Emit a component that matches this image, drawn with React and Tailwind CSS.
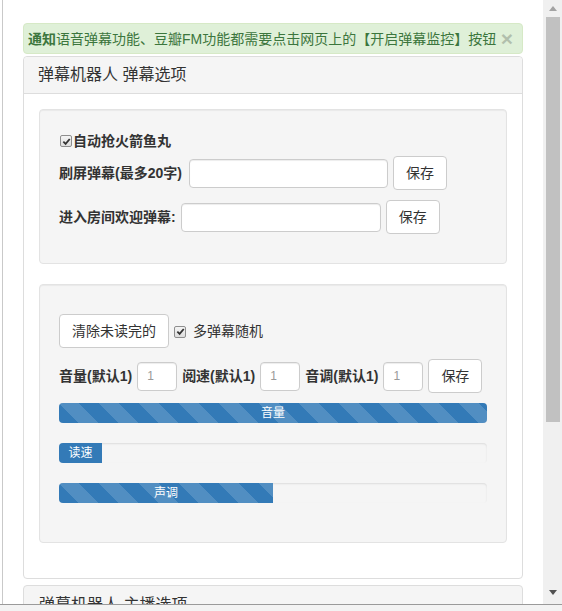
import React from "react";

const font = {
  fontFamily: '"Liberation Sans", "Noto Sans CJK SC", sans-serif',
};

const stripes =
  "bg-[#337ab7] bg-[linear-gradient(45deg,rgba(255,255,255,.15)_25%,transparent_25%,transparent_50%,rgba(255,255,255,.15)_50%,rgba(255,255,255,.15)_75%,transparent_75%,transparent)] bg-[length:40px_40px]";

function Box() {
  return (
    <span className="inline-flex w-[12px] h-[12px] items-center justify-center border border-[#8e8e8e] rounded-[2px] bg-[linear-gradient(#f4f4f4,#dedede)] shrink-0">
      <svg width="9" height="9" viewBox="0 0 10 10">
        <path d="M1.5 5.2 L4 7.6 L8.6 2.2" fill="none" stroke="#333" strokeWidth="2" />
      </svg>
    </span>
  );
}

function Btn({ children, className = "" }) {
  return (
    <button className={"h-[34px] px-[12px] border border-[#ccc] rounded-[4px] bg-white text-[14px] leading-[20px] text-[#333] shrink-0 " + className}>
      {children}
    </button>
  );
}

function Input({ className = "", value }) {
  return (
    <div className={"h-[29px] border border-[#ccc] rounded-[4px] bg-white shadow-[inset_0_1px_1px_rgba(0,0,0,.075)] text-[12px] text-[#999] leading-[27px] pl-[9px] shrink-0 " + className}>
      {value}
    </div>
  );
}

function Progress({ width, label, striped }) {
  return (
    <div className="h-[20px] bg-[#f5f5f5] rounded-[4px] shadow-[inset_0_1px_2px_rgba(0,0,0,.1)] overflow-hidden">
      <div
        className={"h-full text-white text-[12px] leading-[20px] text-center " + (striped ? stripes : "bg-[#337ab7]")}
        style={{ width }}
      >
        {label}
      </div>
    </div>
  );
}

export default function App() {
  return (
    <div className="w-[562px] h-[611px] bg-[#f3f3f3] overflow-hidden text-[14px] leading-[20px] text-[#333]" style={font}>
      <div className="flex h-[605px] border-b border-[#9a9a9a]">
        <div className="w-[2px] bg-white"></div>
        <div className="w-[541px] border-l border-[#c9c9c9] bg-white overflow-hidden px-[20px] pt-[23px]">
          {/* alert */}
          <div className="flex items-center h-[31px] bg-[#dff0d8] border border-[#d6e9c6] rounded-[4px] pl-[4px] pr-[9px] text-[#3c763d]">
            <span className="font-bold">通知</span>
            <span>语音弹幕功能、豆瓣FM功能都需要点击网页上的【开启弹幕监控】按钮</span>
            <span className="ml-auto text-[21px] font-bold leading-[20px] text-black opacity-20">×</span>
          </div>

          {/* panel */}
          <div className="mt-[2px] border border-[#ddd] rounded-[4px] bg-white">
            <div className="h-[37px] bg-[#f5f5f5] border-b border-[#ddd] px-[14px] flex items-center text-[16px] rounded-t-[4px]">
              弹幕机器人 弹幕选项
            </div>
            <div className="px-[15px] pt-[15px] pb-[35px]">
              <div className="bg-[#f5f5f5] border border-[#e3e3e3] rounded-[4px] shadow-[inset_0_1px_1px_rgba(0,0,0,.05)] px-[19px] pt-[19px] pb-[29px]">
                <div className="mt-[2px] h-[20px] flex items-center font-bold pl-[1px] gap-[1px]">
                  <Box />
                  <span>自动抢火箭鱼丸</span>
                </div>
                <div className="mt-[5px] flex items-center gap-[5px]">
                  <span className="font-bold mr-[2px]">刷屏弹幕(最多20字)</span>
                  <Input className="w-[199px]" />
                  <Btn>保存</Btn>
                </div>
                <div className="mt-[10px] flex items-center gap-[5px]">
                  <span className="font-bold">进入房间欢迎弹幕:</span>
                  <Input className="w-[200px]" />
                  <Btn>保存</Btn>
                </div>
              </div>

              <div className="mt-[20px] bg-[#f5f5f5] border border-[#e3e3e3] rounded-[4px] shadow-[inset_0_1px_1px_rgba(0,0,0,.05)] px-[19px] pt-[19px] pb-[19px]">
                <div className="mt-[10px] flex items-center">
                  <Btn>清除未读完的</Btn>
                  <span className="ml-[5px]"><Box /></span>
                  <span className="ml-[7px]">多弹幕随机</span>
                </div>
                <div className="mt-[11px] flex items-center gap-[5px]">
                  <span className="font-bold">音量(默认1)</span>
                  <Input className="w-[40px]" value="1" />
                  <span className="font-bold">阅速(默认1)</span>
                  <Input className="w-[40px]" value="1" />
                  <span className="font-bold">音调(默认1)</span>
                  <Input className="w-[40px]" value="1" />
                  <Btn>保存</Btn>
                </div>
                <div className="mt-[10px] flex flex-col gap-[20px] pb-[20px]">
                  <Progress width="100%" label="音量" striped />
                  <Progress width="10%" label="读速" />
                  <Progress width="50%" label="声调" striped />
                </div>
              </div>
            </div>
          </div>

          <div className="mt-[6px] border border-[#ddd] rounded-[4px] bg-[#f5f5f5] h-[40px] px-[15px] pt-[9px] text-[16px]">
            弹幕机器人 主播选项
          </div>
        </div>

        {/* scrollbar */}
        <div className="w-[19px] bg-[#f0f0f0] flex flex-col items-center">
          <div className="h-[17px] flex items-center justify-center">
            <svg width="8" height="5" viewBox="0 0 8 5"><path d="M0 5 L4 0 L8 5 Z" fill="#a3a3a3" /></svg>
          </div>
          <div className="w-[14px] h-[405px] bg-[#c1c1c1]"></div>
          <div className="mt-auto h-[24px] flex items-center justify-center">
            <svg width="8" height="5" viewBox="0 0 8 5"><path d="M0 0 L8 0 L4 5 Z" fill="#505050" /></svg>
          </div>
        </div>
      </div>
    </div>
  );
}
